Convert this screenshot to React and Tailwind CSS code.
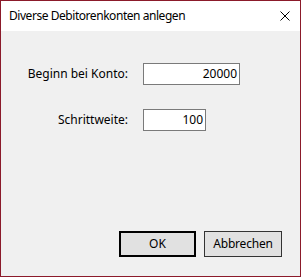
export default function App() {
    return (
        <div className="w-[301px] h-[277px] border border-[#8b1a2a] bg-[#f0f0f0] flex flex-col text-black text-[12px] font-['Segoe_UI','Noto_Sans',sans-serif]">
            {/* title bar */}
            <div className="h-[30px] bg-white flex items-center justify-between pl-2 pr-[10px]">
                <span className="leading-none tracking-[-0.45px]">Diverse Debitorenkonten anlegen</span>
                <svg width="10" height="10" viewBox="0 0 10 10" className="block">
                    <path d="M0.5 0.5 L9.5 9.5 M9.5 0.5 L0.5 9.5" stroke="#000" strokeWidth="1" fill="none" />
                </svg>
            </div>

            {/* form */}
            <div className="flex-1 flex flex-col pt-[32px]">
                <div className="flex flex-col gap-[24px]">
                    <div className="flex items-center gap-[15px]">
                        <label className="w-[127px] text-right">Beginn bei Konto:</label>
                        <div className="w-[97px] h-[22px] bg-white border border-[#7a7a7a] flex items-center justify-end pr-[2px]">
                            20000
                        </div>
                    </div>
                    <div className="flex items-center gap-[15px]">
                        <label className="w-[127px] text-right">Schrittweite:</label>
                        <div className="w-[63px] h-[22px] bg-white border border-[#7a7a7a] flex items-center justify-end pr-[2px]">
                            100
                        </div>
                    </div>
                </div>

                <div className="mt-auto flex justify-end gap-[8px] pr-[18px] pb-[19px]">
                    <button className="w-[77px] h-[26px] border-2 border-black bg-[#e1e1e1] flex items-center justify-center">
                        OK
                    </button>
                    <button className="w-[78px] h-[26px] border border-[#333] bg-[#e1e1e1] flex items-center justify-center tracking-[-0.2px]">
                        Abbrechen
                    </button>
                </div>
            </div>
        </div>
    );
}
